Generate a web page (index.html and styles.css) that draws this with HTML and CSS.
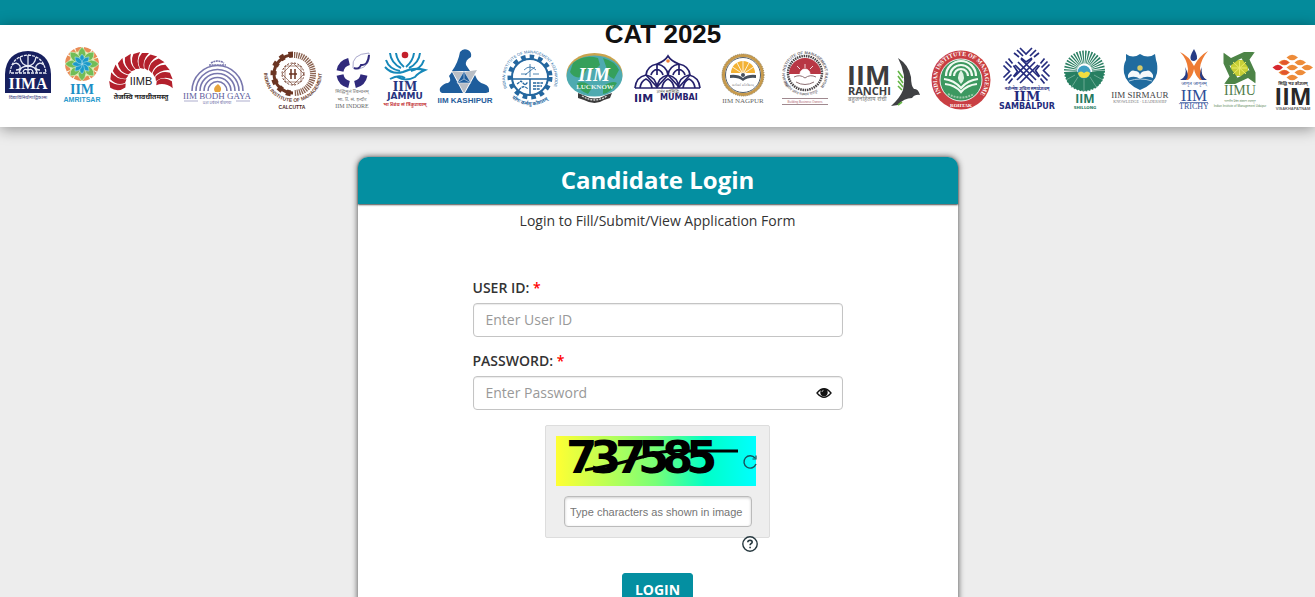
FILE: index.html
```html
<!DOCTYPE html>
<html lang="en">
<head>
<meta charset="utf-8">
<meta name="viewport" content="width=device-width, initial-scale=1">
<title>CAT 2025 - Candidate Login</title>
<link rel="stylesheet" href="styles.css">
</head>
<body>
<div class="topbar"></div>
<header class="banner">
  <h1 class="banner-title">CAT 2025</h1>
  <div class="logos">
    <svg width="57" height="72" viewBox="0 44 57 72" role="img" aria-label="IIM Ahmedabad">
      <path d="M5 93V74Q6 52 28 51Q50 52 51 74V93Z" fill="#17205f"/>
      <g fill="none" stroke="#e8ebf5" stroke-width="1.3">
        <path d="M10 73Q12 56 28 55Q44 56 46 73Z" stroke-dasharray="3 1"/>
        <path d="M28 55V73M20 57Q21 65 28 66Q35 65 36 57M28 66Q20 66 19 73M28 66Q36 66 37 73M12 65Q17 61 20 66Q21 70 16 70M44 65Q39 61 36 66Q35 70 40 70M23 72Q24 68 28 70Q32 68 33 72"/>
      </g>
      <text class="serif bold mid" x="28" y="89" font-size="16" fill="#fff">IIMA</text>
      <text class="deva mid" x="28" y="99" font-size="5" fill="#33397a">विद्याविनियोगाद्विकासः</text>
    </svg>
    <svg width="50" height="72" viewBox="57 44 50 72" role="img" aria-label="IIM Amritsar">
      <circle cx="82" cy="64" r="15" fill="#e6f0b0" stroke="#e98b55" stroke-width="4" stroke-dasharray="7 1"/>
      <g fill="#72bd57" stroke="#f4f8d8" stroke-width=".6">
        <path id="petal" d="M82 64Q74 54 82 47Q90 54 82 64Z"/>
        <use href="#petal" transform="rotate(45 82 64)"/><use href="#petal" transform="rotate(90 82 64)"/><use href="#petal" transform="rotate(135 82 64)"/><use href="#petal" transform="rotate(180 82 64)"/><use href="#petal" transform="rotate(225 82 64)"/><use href="#petal" transform="rotate(270 82 64)"/><use href="#petal" transform="rotate(315 82 64)"/>
      </g>
      <g fill="#1b9ac9" stroke="#bfe5ef" stroke-width=".5">
        <path id="petal2" d="M82 64Q77 59 82 54Q87 59 82 64Z"/>
        <use href="#petal2" transform="rotate(45 82 64)"/><use href="#petal2" transform="rotate(90 82 64)"/><use href="#petal2" transform="rotate(135 82 64)"/><use href="#petal2" transform="rotate(180 82 64)"/><use href="#petal2" transform="rotate(225 82 64)"/><use href="#petal2" transform="rotate(270 82 64)"/><use href="#petal2" transform="rotate(315 82 64)"/>
      </g>
      <text class="serif bold mid" x="82" y="94" font-size="14" fill="#1c8fc6">IIM</text>
      <text class="sans bold mid" x="82" y="102" font-size="7" fill="#2a9bcd">AMRITSAR</text>
    </svg>
    <svg width="73" height="72" viewBox="107 44 73 72" role="img" aria-label="IIM Bangalore">
      <g fill="#b3202c">
        <path id="blade" d="M140 68Q136 60 142 53L149 53Q142 60 144 69Z"/>
        <use href="#blade" transform="rotate(-99 141 84)"/><use href="#blade" transform="rotate(-83 141 84)"/><use href="#blade" transform="rotate(-67 141 84)"/><use href="#blade" transform="rotate(-50 141 84)"/><use href="#blade" transform="rotate(-33 141 84)"/><use href="#blade" transform="rotate(-16 141 84)"/><use href="#blade" transform="rotate(16 141 84)"/><use href="#blade" transform="rotate(33 141 84)"/><use href="#blade" transform="rotate(50 141 84)"/><use href="#blade" transform="rotate(67 141 84)"/><use href="#blade" transform="rotate(83 141 84)"/>
      </g>
      <text class="sans mid" x="141" y="85" font-size="11" fill="#222">IIMB</text>
      <text class="deva bold mid" x="141" y="99" font-size="7" fill="#222">तेजस्वि नावधीतमस्तु</text>
    </svg>
    <svg width="75" height="72" viewBox="180 44 75 72" role="img" aria-label="IIM Bodh Gaya">
      <g fill="none" stroke="#7877ad" stroke-width="1.6">
        <path d="M192 91A25 25 0 0 1 243 91M196 91A21 21 0 0 1 239 91M200 91A17 17 0 0 1 235 91M204 91A13 13 0 0 1 231 91M208 91A9 9 0 0 1 227 91"/>
        <path d="M209 65H226M211 63Q217 59 224 63" stroke-dasharray="2 .6"/>
      </g>
      <path d="M218 84Q223 88 220 92H215Q212 88 218 84Z" fill="#e6a33c"/>
      <text class="serif mid" x="217" y="99" font-size="9" fill="#5d5c9c">IIM BODH GAYA</text>
      <path d="M184 101H198M236 101H250" stroke="#8a89b8" stroke-width=".7"/>
      <text class="deva mid" x="217" y="104" font-size="4" fill="#7877ad">प्रज्ञा प्रबंधनं बोधगया</text>
    </svg>
    <svg width="73" height="72" viewBox="255 44 73 72" role="img" aria-label="IIM Calcutta">
      <g fill="none" stroke="#6b3523">
        <path d="M293 55A19 19 0 0 0 293 93" stroke-width="3"/>
        <path d="M293 54.500A19.500 19.500 0 0 0 293 93.500" stroke-width="6" stroke-dasharray="4.500 4.500"/>
        <path d="M294 55A19 19 0 0 1 294 93" stroke-width="6" stroke="#8a6250" stroke-dasharray="1.300 .9"/>
        <circle cx="293" cy="74" r="11" stroke-width="1" stroke-dasharray="2 1.500"/>
        <path d="M282 74L293 63L304 74L293 85ZM285 66H301V82H285Z" stroke-width=".6"/>
        <path d="M291 69V79M295 69V79M289 74H297" stroke-width="1.500"/>
      </g>
      <path id="calArc" d="M264 73A29 29 0 0 0 322 73" fill="none"/>
      <text class="sans bold" font-size="5" fill="#6b4334"><textPath href="#calArc">INDIAN INSTITUTE OF MANAGEMENT</textPath></text>
      <text class="sans bold mid" x="292" y="109" font-size="5" fill="#4e2a1e">CALCUTTA</text>
    </svg>
    <svg width="49" height="72" viewBox="328 44 49 72" role="img" aria-label="IIM Indore">
      <g fill="none" stroke="#302a7c">
        <path d="M340 71A12 12 0 0 1 349 61.500M340 75A12 12 0 0 0 349 84.500M355 84.500A12 12 0 0 0 364 75" stroke-width="7"/>
        <path d="M353 68Q351 54 369 53Q371 66 359 69Z" stroke="#aaa9cc" stroke-width="1"/>
        <path d="M354 68Q359 70 361 65Q368 66 369 55" stroke-width="2"/>
      </g>
      <text class="deva mid" x="352" y="93" font-size="5" fill="#777">सिद्धिमूलं प्रबन्धनम्</text>
      <text class="deva mid" x="352" y="101" font-size="5" fill="#777">भा. प्र. सं. इन्दौर</text>
      <text class="serif mid" x="352" y="108" font-size="6" fill="#666">IIM INDORE</text>
    </svg>
    <svg width="56" height="72" viewBox="377 44 56 72" role="img" aria-label="IIM Jammu">
      <circle cx="405" cy="55" r="3.300" fill="#c3202b"/>
      <g fill="none" stroke="#1688b9" stroke-width="2">
        <path d="M390 53Q391 63 401 68M396 53Q397 61 404 67M420 53Q419 63 409 68M414 53Q413 61 406 67M386 60Q389 69 400 71M424 60Q421 69 411 71"/>
        <path d="M385 67Q392 75 403 72Q413 67 425 70Q418 73 415 77Q406 82 397 77M390 79Q399 74 405 78"/>
      </g>
      <text class="wide-serif bold mid" x="405" y="91" font-size="12" fill="#27357f">IIM</text>
      <text class="wide bold mid" x="405" y="99" font-size="9" fill="#27357f">JAMMU</text>
      <text class="deva bold mid" x="405" y="106" font-size="5" fill="#c63a40">भा प्रबंध सं त्रिकुटायाम्</text>
    </svg>
    <svg width="64" height="72" viewBox="433 44 64 72" role="img" aria-label="IIM Kashipur">
      <g fill="#1e5d9c">
        <path d="M460 52Q463 48 468 50Q472 52 471 57Q465 60 466 65L470 71H452Q458 63 460 52Z"/>
        <path d="M452 72L463 93H442Q439 92 440 88Q444 83 448 83Q452 81 449 76Z"/>
        <path d="M465 93L475 75Q478 83 484 84Q490 86 489 92L486 93Z"/>
      </g>
      <path d="M452 71L464 72L458 81ZM464 72L477 70L470 82ZM458 82H470L464 93Z" fill="#b9bec5"/>
      <path d="M464 71L471 83H457Z" fill="#1e5d9c" stroke="#dce4ee" stroke-width=".6"/>
      <path d="M464 71V79L457 83M464 79L471 83" fill="none" stroke="#dce4ee" stroke-width=".6"/>
      <text class="sans bold mid" x="465" y="103" font-size="8" fill="#285e9c">IIM KASHIPUR</text>
    </svg>
    <svg width="65" height="72" viewBox="497 44 65 72" role="img" aria-label="IIM Kozhikode">
      <g fill="none" stroke="#24679f">
        <circle cx="530" cy="77" r="18" stroke-width="2"/>
        <circle cx="530" cy="77" r="20" stroke-width="5" stroke-dasharray="4.480 4"/>
        <path d="M513 79H547M530 79V95" stroke-width="1.500"/>
        <path d="M530 64V77M524 70Q530 64 536 70M525 75L535 67M521 74H527M533 74H539" stroke-width=".8"/>
        <path d="M517 84L521 81L525 85L528 82M519 90Q523 84 528 89M533 83H543M533 86H542M533 89H540" stroke-width="1.300" stroke-dasharray="3 .7"/>
      </g>
      <path id="kozTop" d="M507 88A25 25 0 1 1 553 88" fill="none"/>
      <path id="kozLow" d="M512 98A28 28 0 0 0 552 96" fill="none"/>
      <text class="sans" font-size="4" fill="#24679f"><textPath href="#kozTop">INDIAN INSTITUTE OF MANAGEMENT KOZHIKODE</textPath></text>
      <text class="deva bold" font-size="5" fill="#24679f"><textPath href="#kozLow">योगः कर्मसु कौशलम्</textPath></text>
    </svg>
    <svg width="66" height="72" viewBox="562 44 66 72" role="img" aria-label="IIM Lucknow">
      <ellipse cx="594.500" cy="74" rx="28" ry="21" fill="#c9a44f"/>
      <ellipse cx="594.500" cy="76" rx="28" ry="20.500" fill="#4eaab0"/>
      <path d="M573 63Q584 54 598 58L600 65Q594 72 587 69L582 77Q574 79 570 72ZM603 58Q615 61 619 70L614 79Q606 76 607 69ZM577 83Q586 80 592 88L588 94Q579 91 577 83ZM603 86Q613 80 617 83Q612 92 603 94Z" fill="#35a05b"/>
      <text class="serif bold ital mid" x="594" y="81" font-size="19" fill="#fff">IIM</text>
      <text class="serif bold mid" x="595" y="89" font-size="7" fill="#e9f5ee">LUCKNOW</text>
      <path d="M578 93L583 95Q595 102 606 95L612 93L610 98L604 100Q595 106 584 100L578 98Z" fill="#3b3b3b"/>
      <path d="M582 96Q595 104 607 96" fill="none" stroke="#ddd" stroke-width="1.300" stroke-dasharray="2 1"/>
    </svg>
    <svg width="84" height="72" viewBox="628 44 84 72" role="img" aria-label="IIM Mumbai">
      <g fill="none" stroke="#24206b" stroke-width="1.700">
        <path d="M635 88H700"/>
        <path id="fan" d="M635 88Q636 77 646 75Q656 77 657 88M640 88Q641 81 646 79Q651 81 652 88"/>
        <use href="#fan" x="22"/><use href="#fan" x="43"/>
        <path id="fan2" d="M646 75Q647 66 657 64Q667 66 668 75M657 75V65M651 75Q652 71 657 69Q662 71 663 75"/>
        <use href="#fan2" x="22"/>
        <path d="M657 64Q665 61 668 56Q671 61 679 64M646 75L657 87L668 75L679 87L690 75"/>
      </g>
      <circle cx="668" cy="61" r="1.800" fill="#ef8137"/>
      <text class="deva mid" x="668" y="93" font-size="4" fill="#555">ज्ञानेन सर्वसिद्धिः</text>
      <text class="wide bold" x="634" y="102" font-size="11" fill="#24206b">IIM</text>
      <text class="wide bold" x="660" y="100" font-size="8" fill="#24206b">MUMBAI</text>
    </svg>
    <svg width="62" height="72" viewBox="712 44 62 72" role="img" aria-label="IIM Nagpur">
      <circle cx="743" cy="75" r="19.500" fill="#fff" stroke="#c79a4c" stroke-width="3"/>
      <circle cx="743" cy="75" r="17.500" fill="none" stroke="#555f68" stroke-width="1"/>
      <circle cx="743" cy="75" r="21" fill="none" stroke="#8d7b51" stroke-width="1" stroke-dasharray="1 1"/>
      <path d="M731 73A12 12 0 0 1 755 73" fill="#f3b234"/>
      <path d="M743 74V59M743 74L736 61M743 74L750 61M743 74L731 66M743 74L755 66" stroke="#fff" stroke-width=".8"/>
      <path d="M730 75Q738 74 743 78Q748 74 756 75V78Q748 77 743 81Q738 77 730 78Z" fill="#46505d"/>
      <circle cx="743" cy="75" r="2" fill="#46505d"/>
      <text class="sans mid" x="743" y="86" font-size="3" fill="#666">सत्ये सर्वं प्रतिष्ठितम्</text>
      <text class="serif mid" x="743" y="103" font-size="7" fill="#666">IIM NAGPUR</text>
    </svg>
    <svg width="66" height="72" viewBox="774 44 66 72" role="img" aria-label="IIM Raipur">
      <circle cx="805" cy="73" r="17" fill="#fff" stroke="#494447" stroke-width="2.500" stroke-dasharray="1.500 .8"/>
      <path d="M789 74A16 16 0 0 1 821 74Z" fill="#b83744"/>
      <path d="M800 74A5 5 0 0 1 810 74M805 68V64M800 69L797 66M810 69L813 66" fill="#fff" stroke="#fff" stroke-width=".8"/>
      <path d="M794 77Q800 74 805 78Q810 74 816 77M796 82Q805 87 814 82" fill="none" stroke="#8e7175" stroke-width="1"/>
      <path id="raiRing" d="M789 86A20 20 0 1 1 821 86" fill="none"/>
      <path id="raiLow" d="M784 82A23 23 0 0 0 826 82" fill="none"/>
      <text class="sans bold" font-size="4" fill="#68636a"><textPath href="#raiRing">INDIAN INSTITUTE OF MANAGEMENT RAIPUR</textPath></text>
      <text class="deva" font-size="4" fill="#68636a"><textPath href="#raiLow">भारतीय प्रबंध संस्थान रायपुर</textPath></text>
      <path d="M782 98.500H828M782 104.500H828" stroke="#876b72" stroke-width=".8"/>
      <text class="sans mid" x="805" y="103" font-size="3" fill="#b06670">Building Business Owners</text>
    </svg>
    <svg width="86" height="72" viewBox="840 44 86 72" role="img" aria-label="IIM Ranchi">
      <text class="open bold" x="847" y="85" font-size="27" fill="#3d3c3e">IIM</text>
      <text class="open bold" x="848" y="95" font-size="11" fill="#3d3c3e">RANCHI</text>
      <text class="deva" x="848" y="101" font-size="6" fill="#777">बहुजनहिताय रांची</text>
      <path d="M898 58Q909 65 911 77Q911 86 914 89Q918 88 920 95Q915 94 912 98Q904 98 898 105L891 106Q900 98 903 90Q907 75 898 58Z" fill="#3f4043"/>
      <path d="M898 71L903 78M898 76L903 83M898 81L903 87M898 86L902 90M898 105L902 102" stroke="#63b545" stroke-width="1.600"/>
    </svg>
    <svg width="70" height="72" viewBox="926 44 70 72" role="img" aria-label="IIM Rohtak">
      <circle cx="961" cy="80" r="29.500" fill="#c93f43"/>
      <circle cx="961" cy="80" r="21" fill="#3d9860" stroke="#eee" stroke-width="1"/>
      <g fill="none" stroke="#f1faf1" stroke-width="2.200">
        <path d="M946 76A15 15 0 0 1 976 76M950 76A11 11 0 0 1 972 76M954 76A7 7 0 0 1 968 76"/>
        <path d="M944 79Q954 80 961 88Q968 80 978 79M945 84Q955 85 961 92Q967 85 977 84"/>
      </g>
      <path d="M961 70Q967 78 961 84Q955 78 961 70Z" fill="#dff2e3"/>
      <path d="M948 94Q961 101 974 94" fill="none" stroke="#9bc7a7" stroke-width="2" stroke-dasharray="2 1"/>
      <path id="rohTop" d="M941 93A24 24 0 1 1 981 93" fill="none"/>
      <text class="serif bold" font-size="6" fill="#fff"><textPath href="#rohTop">INDIAN INSTITUTE OF MANAGEMENT</textPath></text>
      <text class="serif bold mid" x="961" y="107" font-size="5" fill="#fff">ROHTAK</text>
    </svg>
    <svg width="62" height="72" viewBox="996 44 62 72" role="img" aria-label="IIM Sambalpur">
      <g fill="none" stroke="#242b7d" stroke-width="1.700">
        <path d="M1015 65L1033 83M1018 62L1036 80M1021 59L1039 77M1038 65L1020 83M1035 62L1017 80M1032 59L1014 77"/>
        <path id="samChev" d="M1014 53L1019 57M1017 50L1023 56M1020 48L1026 54L1032 48M1030 56L1036 50M1034 57L1039 53M1021 58L1026 62L1032 58"/>
        <use href="#samChev" transform="rotate(90 1026.500 71)"/><use href="#samChev" transform="rotate(-90 1026.500 71)"/>
      </g>
      <text class="deva bold mid" x="1027" y="90" font-size="4" fill="#242b7d">नवोन्मेषः शुचिता समावेशत्वम्</text>
      <text class="wide-serif bold mid" x="1027" y="101" font-size="13" fill="#242b7d">IIM</text>
      <text class="wide bold mid" x="1027" y="109" font-size="8" fill="#242b7d">SAMBALPUR</text>
    </svg>
    <svg width="50" height="72" viewBox="1058 44 50 72" role="img" aria-label="IIM Shillong">
      <circle cx="1084.500" cy="71" r="14" fill="none" stroke="#2c8064" stroke-width="13" stroke-dasharray="1.200 1"/>
      <path d="M1065 72H1104Q1103 89 1084 91Q1066 89 1065 72Z" fill="#277f61"/>
      <path d="M1084 79V91M1078 77L1071 88M1090 77L1097 88M1075 75L1066 80M1094 75L1103 80" stroke="#87baa8" stroke-width=".7"/>
      <circle cx="1084" cy="72" r="6.500" fill="#3f9fc2"/>
      <path d="M1078 73Q1081 70 1084 73Q1087 70 1090 73Q1089 78 1084 78Q1079 78 1078 73Z" fill="#f1dd3f"/>
      <text class="open bold mid" x="1085" y="103" font-size="12" fill="#267a60">IIM</text>
      <text class="wide bold mid" x="1085" y="109" font-size="4" fill="#267a60">SHILLONG</text>
    </svg>
    <svg width="66" height="72" viewBox="1108 44 66 72" role="img" aria-label="IIM Sirmaur">
      <path d="M1126 54Q1133 59 1140 54Q1148 59 1155 54L1156 60Q1158 65 1157 73Q1155 84 1140 90Q1126 84 1124 73Q1123 65 1126 60Z" fill="#206b9f"/>
      <circle cx="1140" cy="68" r="2.700" fill="#d5c968"/>
      <path d="M1128 75Q1131 69 1135 71Q1139 71 1140 75Q1141 71 1146 71Q1150 69 1153 75V78Q1146 75 1140 79Q1135 75 1128 78Z" fill="#f5f9fb"/>
      <path d="M1129 81Q1140 77 1152 81" fill="none" stroke="#a9c9dd" stroke-width="1"/>
      <text class="serif mid" x="1140" y="98" font-size="9" fill="#444">IIM SIRMAUR</text>
      <text class="serif mid" x="1140" y="103" font-size="4" fill="#777">KNOWLEDGE · LEADERSHIP</text>
    </svg>
    <svg width="38" height="72" viewBox="1174 44 38 72" role="img" aria-label="IIM Tiruchirappalli">
      <path d="M1194 49Q1199 58 1196 60Q1194 62 1191 60Q1189 57 1194 49Z" fill="#273c86"/>
      <path d="M1180 52Q1189 56 1194 66Q1199 56 1208 51Q1201 59 1200 68Q1202 76 1206 80H1200Q1195 75 1194 69Q1193 76 1188 80H1182Q1188 75 1188 69Q1187 59 1180 52Z" fill="#ee7c35"/>
      <path d="M1185 67Q1188 76 1180 80H1186Q1190 76 1185 67ZM1202 67Q1200 76 1207 80H1202Q1198 76 1202 67Z" fill="#273c86"/>
      <text class="deva mid" x="1194" y="85" font-size="5" fill="#334d91">जागृत जागृतम्</text>
      <text class="serif mid" x="1194" y="101" font-size="17" fill="#2f4f98">IIM</text>
      <path d="M1180 102.500H1208" stroke="#2f4f98" stroke-width=".7"/>
      <text class="serif mid" x="1194" y="109" font-size="8" fill="#2f4f98">TRICHY</text>
    </svg>
    <svg width="56" height="72" viewBox="1212 44 56 72" role="img" aria-label="IIM Udaipur">
      <rect x="1231" y="60" width="17" height="16" fill="#c7cf37"/>
      <g fill="#4d8447">
        <path id="vane" d="M1224 53L1231 58L1244 52H1255L1238 60L1230 66L1224 60Z"/>
        <use href="#vane" transform="rotate(90 1239.500 68)"/><use href="#vane" transform="rotate(180 1239.500 68)"/><use href="#vane" transform="rotate(270 1239.500 68)"/>
      </g>
      <path d="M1233 62L1246 74M1246 62L1233 74M1239.500 61V75M1232 68H1247" stroke="#ecec6a" stroke-width="1"/>
      <text class="serif mid" x="1240" y="95" font-size="14" fill="#4f7c4b">IIMU</text>
      <text class="deva mid" x="1240" y="102" font-size="3" fill="#688d65">भारतीय प्रबंध संस्थान उदयपुर</text>
      <text class="sans mid" x="1240" y="107" font-size="3" fill="#5d8a59">Indian Institute of Management Udaipur</text>
    </svg>
    <svg width="47" height="72" viewBox="1268 44 47 72" role="img" aria-label="IIM Visakhapatnam">
      <g fill="#e66b35">
        <path id="dia" d="M1286.500 57.500Q1292 52 1298 57.500Q1292 63 1286.500 57.500Z" fill="#ed8b39"/>
        <use href="#dia" x="-8" y="5"/><use href="#dia" x="8" y="5"/><use href="#dia" y="10"/><use href="#dia" x="15" y="10"/><use href="#dia" x="-8" y="15"/><use href="#dia" x="8" y="15"/><use href="#dia" y="20"/>
        <path d="M1272.500 67.500Q1278 62 1283 67.500Q1278 73 1272.500 67.500Z" fill="#d7282f"/>
        <path d="M1280 62.500Q1285 58 1289 62.500Q1285 67 1280 62.500ZM1280 72.500Q1285 68 1289 72.500Q1285 77 1280 72.500Z" fill="#e2562e"/>
      </g>
      <text class="deva bold mid" x="1293" y="85" font-size="4" fill="#333">सिद्धि भव कौशलम्</text>
      <text class="open bold mid" x="1293" y="105" font-size="23" fill="#272729">IIM</text>
      <text class="sans bold mid" x="1293" y="110" font-size="4" fill="#666">VISAKHAPATNAM</text>
    </svg>
  </div>
</header>
<main class="card">
  <h2 class="card-title">Candidate Login</h2>
  <form class="login" action="#">
    <p class="intro">Login to Fill/Submit/View Application Form</p>
    <div class="fields">
      <div class="field">
        <label for="user">USER ID: <span class="star">*</span></label>
        <input class="box" id="user" type="text" placeholder="Enter User ID">
      </div>
      <div class="field">
        <label for="pass">PASSWORD: <span class="star">*</span></label>
        <div class="password">
          <input class="box" id="pass" type="password" placeholder="Enter Password">
          <button class="icon eye" type="button" aria-label="Show password">
            <svg width="16" height="12" viewBox="0 0 16 12"><path d="M1 6Q8-2.500 15 6Q8 14.500 1 6Z" fill="#fff" stroke="#111" stroke-width="1.300"/><circle cx="8" cy="5.500" r="3.700" fill="#111"/><path d="M6 5Q6 3.500 7.500 3.300" fill="none" stroke="#ddd" stroke-width=".8"/></svg>
          </button>
        </div>
      </div>
    </div>
    <div class="captcha">
      <div class="challenge">
        <svg width="200" height="50" viewBox="0 0 200 50" role="img" aria-label="Captcha">
          <defs><linearGradient id="sky"><stop offset="0" stop-color="#ff3"/><stop offset=".35" stop-color="#a2ff62"/><stop offset=".5" stop-color="#7f7"/><stop offset=".75" stop-color="#00ffc8"/><stop offset="1" stop-color="#0ff"/></linearGradient></defs>
          <rect width="200" height="50" fill="url(#sky)"/>
          <text class="wide bold" x="10 34 59 82 106 130" y="37" font-size="45" fill="#000">737585</text>
          <path d="M29 34Q60 29 86 21Q112 13 133 15H182" fill="none" stroke="#000" stroke-width="3"/>
        </svg>
        <button class="icon refresh" type="button" aria-label="Refresh captcha">
          <svg width="16" height="16" viewBox="0 0 16 16"><path d="M13 4A6.200 6.200 0 1 0 14 10" fill="none" stroke="#16525c" stroke-width="1.400"/><path d="M14 1.500V5H10.500" fill="none" stroke="#16525c" stroke-width="1.200"/></svg>
        </button>
      </div>
      <input class="code" type="text" aria-label="Captcha characters" placeholder="Type characters as shown in image">
    </div>
    <div class="help">
      <button class="icon" type="button" aria-label="Captcha help">
        <svg width="16" height="16" viewBox="0 0 16 16"><circle cx="8" cy="8" r="7.200" fill="#fff" stroke="#26383f" stroke-width="1.400"/><path d="M5.800 6.300Q5.900 4.300 8 4.300Q10.200 4.400 10.200 6.200Q10.100 7.200 8.900 7.800Q8.100 8.300 8.100 9.300M8.100 10.700V12.200" fill="none" stroke="#26383f" stroke-width="1.600"/></svg>
      </button>
    </div>
    <button class="submit" type="submit">LOGIN</button>
  </form>
</main>
</body>
</html>
```

FILE: styles.css
```css
* {
  box-sizing: border-box;
}

body {
  margin: 0;
  background: #ededed;
  color: #333;
  font: 14px/20px "Open Sans", sans-serif;
}

.topbar {
  height: 25px;
  background: #048b9b;
}

.banner {
  padding-bottom: 11px;
  background: #fff;
  box-shadow: 0 2px 14px rgba(0, 0, 0, 0.4);
}

.banner-title {
  margin: 0;
  padding-left: 11px;
  color: #111;
  text-align: center;
  font: bold 26px/19px "Liberation Sans", Arial, sans-serif;
}

.logos {
  display: flex;
  justify-content: space-between;
}

.logos svg {
  flex: 0 1 auto;
  min-width: 0;
  overflow: visible;
}

.sans { font-family: "Liberation Sans", Arial, sans-serif; }
.serif { font-family: "Liberation Serif", serif; }
.open { font-family: "Open Sans", sans-serif; }
.wide { font-family: "DejaVu Sans", sans-serif; }
.wide-serif { font-family: "DejaVu Serif", serif; }
.deva { font-family: "Noto Sans", "Noto Sans Devanagari", sans-serif; }
.bold { font-weight: bold; }
.ital { font-style: italic; }
.mid { text-anchor: middle; }

.card {
  max-width: 600px;
  margin: 30px auto 0;
  background: #fff;
  border-radius: 10px 10px 0 0;
  box-shadow: 0 0 6px rgba(0, 0, 0, 0.7);
}

.card-title {
  margin: 0;
  padding: 6px 0 7px;
  border-radius: 10px 10px 0 0;
  background: #048fa1;
  box-shadow: 0 1px 2px rgba(0, 0, 0, 0.7);
  color: #fff;
  text-align: center;
  font-size: 24px;
  line-height: 34px;
}

.login {
  display: flex;
  flex-direction: column;
  align-items: center;
  padding: 7px 16px 16px;
}

.intro {
  margin: 0 0 48px;
}

.fields {
  width: 100%;
  max-width: 370px;
}

.field {
  margin-bottom: 15px;
}

.field label {
  display: block;
  height: 24px;
  font-weight: 600;
  line-height: 18px;
}

.star {
  color: #f00;
}

.box {
  display: block;
  width: 100%;
  height: 34px;
  padding: 5px 12px 7px;
  border: 1px solid #c4c4c4;
  border-radius: 4px;
  background: #fff;
  box-shadow: inset 0 1px 1px rgba(0, 0, 0, 0.08);
  color: #555;
  font: 14px/20px "Open Sans", sans-serif;
}

.box::placeholder {
  color: #999;
}

.icon {
  display: block;
  padding: 0;
  border: 0;
  background: none;
  cursor: pointer;
}

.icon svg,
.challenge svg {
  display: block;
}

.password,
.challenge {
  position: relative;
}

.eye {
  position: absolute;
  top: 11px;
  right: 11px;
}

.captcha {
  width: 225px;
  padding: 10px;
  border: 1px solid #ddd;
  border-radius: 2px;
  background: #eee;
}

.challenge svg {
  overflow: visible;
}

.refresh {
  position: absolute;
  top: 18px;
  left: 186px;
}

.code {
  display: block;
  width: 188px;
  height: 31px;
  margin: 10px 0 0 8px;
  padding: 0 5px;
  border: 1px solid #bbb;
  border-radius: 4px;
  background: #fff;
  box-shadow: inset 0 1px 3px rgba(0, 0, 0, 0.2);
  font: 11px "Liberation Sans", Arial, sans-serif;
}

.code::placeholder {
  color: #757575;
}

.help {
  display: flex;
  justify-content: flex-end;
  width: 225px;
  margin: -2px 0 21px;
  padding-right: 12px;
}

.submit {
  padding: 6px 12px;
  border: 1px solid #048fa1;
  border-radius: 3px;
  background: #048fa1;
  color: #fff;
  font: bold 14px/20px "Open Sans", sans-serif;
}
```
